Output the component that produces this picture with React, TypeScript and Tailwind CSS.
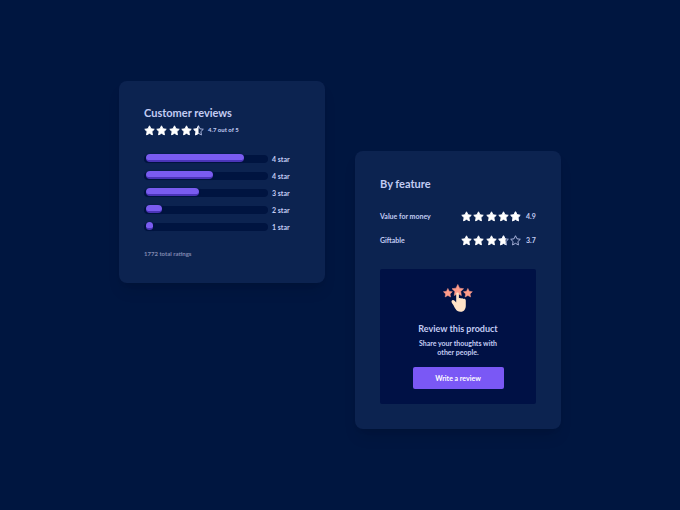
import React from 'react';

const STAR = 'M12 1.6l3.2 6.7 7.3 1-5.3 5.1 1.3 7.3-6.5-3.5-6.5 3.5 1.3-7.3-5.3-5.1 7.3-1z';

const breakdown = [
  { id: 'a', label: '4 star', percent: 82 },
  { id: 'b', label: '4 star', percent: 56 },
  { id: 'c', label: '3 star', percent: 44 },
  { id: 'd', label: '2 star', percent: 13 },
  { id: 'e', label: '1 star', percent: 6 },
];

const features = [
  { name: 'Value for money', score: 4.9 },
  { name: 'Giftable', score: 3.7 },
];

// One star, filled from the left by the given fraction
const Star = ({ fill }: { fill: number }) => (
  <svg viewBox="0 0 24 24" className="size-[11px]" aria-hidden="true">
    {fill < 1 && <path d={STAR} fill="none" stroke="#b5bee6" strokeWidth="2" strokeLinejoin="round" />}
    <path
      d={STAR}
      fill="#fff"
      stroke="#fff"
      strokeWidth="2"
      strokeLinejoin="round"
      style={{ clipPath: `inset(0 ${(1 - fill) * 100}% 0 0)` }}
    />
  </svg>
);

const Stars = ({ score }: { score: number }) => (
  <div className="flex w-[60px] justify-between" role="img" aria-label={`${score} out of 5 stars`}>
    {[0, 1, 2, 3, 4].map((i) => (
      <Star key={i} fill={Math.max(0, Math.min(1, score - i))} />
    ))}
  </div>
);

const TapStars = () => (
  <svg viewBox="0 0 30 29" className="h-[29px] w-[30px]" aria-hidden="true">
    <g fill="#ff9c8a" stroke="#ff9c8a" strokeLinejoin="round">
      <path d={STAR} transform="translate(-.3 3.7) scale(.43)" />
      <path d={STAR} transform="translate(8.2 -.4) scale(.55)" />
      <path d={STAR} transform="translate(19.7 3.7) scale(.43)" />
    </g>
    <path
      d="M13.2 10c0-1.9 2.7-1.9 2.7 0v4.3c.7-.5 1.8-.4 2.3.2.7-.5 1.8-.3 2.2.4 1-.4 2.4.1 2.4 1.5v5.1c0 2-.5 3.4-1.3 4.4-.8 1.2-2 1.8-4 1.8-2.5 0-3.8-.8-4.9-2.6-1-1.6-1.7-3.5-3-5.2-.9-1.3-1.4-2.4-.9-3.2.7-1 2.2-.7 3.2.4l1.3 1.4z"
      fill="#ffe3c7"
    />
  </svg>
);

const App = () => {
  return (
    <main className="flex min-h-screen items-center justify-center bg-[#001640] font-['Lato',sans-serif] font-bold text-[#c3ccf3]">
      <div className="flex items-start gap-[30px]">
        {/* Customer reviews */}
        <section className="w-[206px] rounded-lg bg-[#0c2350] px-[25px] pt-[25px] pb-[23px] shadow-lg shadow-black/10">
          <h2 className="text-[11px] leading-[14px]">Customer reviews</h2>
          <div className="mt-1 flex items-center gap-1">
            <Stars score={4.5} />
            <span className="text-[6px] leading-3">4.7 out of 5</span>
          </div>

          <ul className="mt-[17px] space-y-[5px]">
            {breakdown.map((row) => (
              <li key={row.id} className="flex h-3 items-center gap-1">
                <div className="h-2 w-[124px] rounded-full bg-[#001440] px-0.5">
                  <div
                    className="relative -top-px h-2 rounded-full border-b-2 border-[#4b35b8] bg-[#7a5cf0] shadow-[0_0_2px_#001440]"
                    style={{ width: `${row.percent}%` }}
                  />
                </div>
                <span className="text-[7px] leading-3 whitespace-nowrap">{row.label}</span>
              </li>
            ))}
          </ul>

          <p className="mt-[15px] text-[6px] leading-3 text-[#8089b0]">1772 total ratings</p>
        </section>

        {/* By feature */}
        <section className="mt-[70px] w-[206px] rounded-lg bg-[#0c2350] px-[25px] pt-[26px] pb-[25px] shadow-lg shadow-black/10">
          <h2 className="text-[11px] leading-[14px]">By feature</h2>
          <ul className="mt-[19px] space-y-3">
            {features.map((feature) => (
              <li key={feature.name} className="flex h-3 items-center">
                <span className="flex-1 text-[7px] leading-3">{feature.name}</span>
                <Stars score={feature.score} />
                <span className="ml-[5px] w-[10px] text-[7px] leading-3">{feature.score}</span>
              </li>
            ))}
          </ul>

          <div className="mt-[23px] flex flex-col items-center rounded-xs bg-[#001145] px-4 py-[15px] text-center">
            <TapStars />
            <h3 className="mt-[10px] text-[9px] leading-3">Review this product</h3>
            <p className="mt-1 w-[88px] text-[7px] leading-[9px]">
              Share your thoughts with other people.
            </p>
            <button
              type="button"
              className="mt-[10px] h-[22px] w-[91px] rounded-xs bg-[#7a58f5] text-[7px] font-bold text-white"
            >
              Write a review
            </button>
          </div>
        </section>
      </div>
    </main>
  );
};

export default App;
